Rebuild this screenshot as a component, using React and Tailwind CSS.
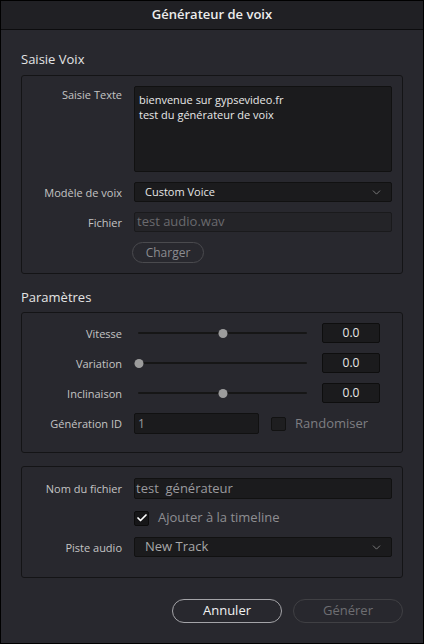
import { ChevronDown, Check } from "lucide-react";

const FONT = { fontFamily: '"Open Sans", "Noto Sans", sans-serif' };

function Label({ children }) {
  return (
    <div className="text-right text-[11px] text-[#c4c4c4] leading-none pr-3">
      {children}
    </div>
  );
}

function Select({ value, muted }) {
  return (
    <div className="h-[20px] flex items-center justify-between bg-[#1b1b1d] border border-[#111] rounded-[2px] pl-[10px] pr-[8px]">
      <span className={muted ? "text-[13px] text-[#a8a8a8]" : "text-[11px] text-[#e6e6e6]"}>
        {value}
      </span>
      <ChevronDown size={13} strokeWidth={1.5} className="text-[#8c8c8c]" />
    </div>
  );
}

function Slider({ pos }) {
  return (
    <div className="relative h-[10px] flex items-center mx-1">
      <div className="h-[2px] w-full bg-[#161616] rounded" />
      <div
        className="absolute w-[9px] h-[9px] rounded-full bg-[#9c9c9c] -translate-x-1/2"
        style={{ left: `${pos}%` }}
      />
    </div>
  );
}

const PARAMS = [
  { label: "Vitesse", pos: 50 },
  { label: "Variation", pos: 0.5 },
  { label: "Inclinaison", pos: 50 },
];

export default function App() {
  return (
    <div
      className="w-[424px] h-[644px] bg-[#28282e] border border-black flex flex-col"
      style={FONT}
    >
      {/* title bar */}
      <div className="h-[29px] shrink-0 bg-[#202024] border-b border-[#0c0c0e] flex items-center justify-center">
        <span className="text-[13px] font-semibold text-[#ececec]">
          Générateur de voix
        </span>
      </div>

      <div className="flex-1 flex flex-col px-[20px]">
        <div className="text-[13px] text-[#e4e4e4] mt-[20px] mb-[7px] leading-[18px]">
          Saisie Voix
        </div>

        {/* voice input group */}
        <div className="border border-[#141416] rounded-[3px] pt-[10px] pb-[10px] pr-[10px] grid grid-cols-[112px_1fr] gap-y-[10px] items-center">
          <div className="self-start pt-[3px]">
            <Label>Saisie Texte</Label>
          </div>
          <div className="h-[86px] bg-[#1b1b1d] border border-[#111] rounded-[2px] px-[4px] pt-[5px] text-[11px] leading-[15px] text-[#e8e8e8]">
            bienvenue sur gypsevideo.fr
            <br />
            test du générateur de voix
          </div>

          <Label>Modèle de voix</Label>
          <Select value="Custom Voice" />

          <Label>Fichier</Label>
          <div className="h-[20px] flex items-center bg-[#242428] border border-[#1a1a1c] rounded-[2px] px-[2px] text-[13px] text-[#6a6a6e]">
            test audio.wav
          </div>

          <div />
          <div className="flex">
            <button className="h-[21px] w-[72px] -ml-[2px] flex items-center justify-center rounded-full border border-[#4a4a4e] text-[12px] text-[#8c8c90]">
              Charger
            </button>
          </div>
        </div>

        <div className="text-[13px] text-[#e4e4e4] mt-[14px] mb-[6px] leading-[18px]">
          Paramètres
        </div>

        {/* parameters group */}
        <div className="border border-[#141416] rounded-[3px] pt-[10px] pb-[18px] pr-[22px] grid grid-cols-[112px_1fr_58px] gap-y-[10px] items-center">
          {PARAMS.map((p) => (
            <div key={p.label} className="contents">
              <Label>{p.label}</Label>
              <div className="pr-[11px]">
                <Slider pos={p.pos} />
              </div>
              <div className="h-[20px] bg-[#1b1b1d] border border-[#0e0e0e] rounded-[2px] flex items-center justify-center text-[12px] text-[#e8e8e8]">
                0.0
              </div>
            </div>
          ))}

          <Label>Génération ID</Label>
          <div className="col-span-2 flex items-center">
            <div className="w-[125px] h-[21px] flex items-center bg-[#1b1b1d] border border-[#111] rounded-[2px] px-[3px] text-[12px] text-[#9a9a9e]">
              1
            </div>
            <div className="ml-[12px] w-[15px] h-[14px] bg-[#1e1e20] border border-[#121212] rounded-[2px]" />
            <span className="ml-[9px] text-[13px] text-[#7e7e82]">Randomiser</span>
          </div>
        </div>

        {/* output group */}
        <div className="mt-[13px] border border-[#141416] rounded-[3px] pt-[11px] pb-[20px] pr-[10px] grid grid-cols-[112px_1fr] gap-y-[9px] items-center">
          <Label>Nom du fichier</Label>
          <div className="h-[21px] flex items-center bg-[#1b1b1d] border border-[#111] rounded-[2px] px-[1px] text-[13px] text-[#9a9a9e]">
            test&nbsp; générateur
          </div>

          <div />
          <div className="flex items-center h-[20px]">
            <div className="w-[15px] h-[15px] bg-[#161618] border border-[#0c0c0c] rounded-[2px] flex items-center justify-center">
              <Check size={12} strokeWidth={3.5} className="text-white" />
            </div>
            <span className="ml-[9px] text-[13px] text-[#8e8e92]">
              Ajouter à la timeline
            </span>
          </div>

          <Label>Piste audio</Label>
          <Select value="New Track" muted />
        </div>

        {/* actions */}
        <div className="mt-[21px] flex justify-end gap-[11px]">
          <button className="w-[110px] h-[24px] rounded-full border border-[#a4a4a8] text-[13px] text-[#f2f2f2]">
            Annuler
          </button>
          <button className="w-[110px] h-[24px] rounded-full border border-[#404044] text-[13px] text-[#6e6e72]">
            Générer
          </button>
        </div>
      </div>
    </div>
  );
}
